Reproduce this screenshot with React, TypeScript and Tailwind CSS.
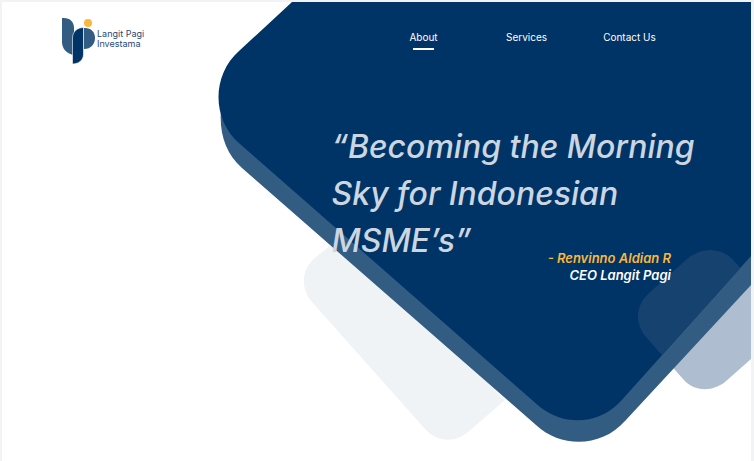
const navItems = [
  { label: 'About', href: '#about', active: true },
  { label: 'Services', href: '#services', active: false },
  { label: 'Contact Us', href: '#contact', active: false },
];

const FRONT =
  'M292 2 L239 51 C212 75 211 119 240 144 L540 407 C564 426 598 425 620 402 L751 256 V2 Z';
const BACK =
  'M221 110 C219 134 226 154 242 168 L536 425 C562 449 602 447 625 421 L751 285 V110 Z';
const TILE =
  'M687 259 C702 246 723 247 735 262 L751 280 V359 L725 382 C712 392 694 392 683 379 L646 337 C635 324 635 307 648 294 Z';

function Backdrop() {
  return (
    <svg viewBox="2 2 749 459" className="absolute top-0 right-0 h-auto w-full" aria-hidden="true">
      <defs>
        <clipPath id="front">
          <path d={FRONT} />
        </clipPath>
      </defs>
      <path
        d="M340 238 L316 257 C301 269 300 288 312 302 L426 430 C437 442 455 443 468 432 L505 400 Z"
        fill="#eff3f6"
      />
      <path d={TILE} fill="#aebdcf" />
      <path d={BACK} fill="#335c83" />
      <path d={FRONT} fill="#003366" />
      <path d={TILE} fill="#16426f" clipPath="url(#front)" />
    </svg>
  );
}

function Logo() {
  return (
    <a href="#home" className="flex items-start text-[#1f4a78]">
      <svg width="35" height="47" viewBox="0 0 35 47" aria-hidden="true">
        <path d="M0 0 H2 C8 0 12 4 12 10 V37 C5 36 0 31 0 24 Z" fill="#335c83" />
        <path d="M22 10 H23 C29 10 33 14 33 20 C33 26 29 31 22 31 Z" fill="#335c83" />
        <path
          d="M21.500 9.500 V36 C21.500 42 17 46 10.500 46 V20 C10.500 14 15 9.500 21.500 9.500 Z"
          fill="#003366"
          stroke="#ffffff"
          strokeWidth="0.600"
        />
        <circle cx="26" cy="5" r="4" fill="#fbb73c" />
      </svg>
      <span className="mt-[11px] flex flex-col text-[9px] leading-[10px]">
        <span>Langit Pagi</span>
        <span>Investama</span>
      </span>
    </a>
  );
}

export default function App() {
  return (
    <div className="min-h-screen border-t-2 border-r-3 border-l-2 border-[#f2f3f5] bg-white font-['Inter',sans-serif]">
      <div className="relative overflow-hidden pb-44">
        <Backdrop />
        <header className="relative flex items-start justify-between pt-4 pr-[70px] pl-15">
          <Logo />
          <nav className="flex pt-[11px] text-[10px] leading-4 text-white">
            {navItems.map((item) => (
              <a key={item.label} href={item.href} className="flex w-[103px] flex-col items-center">
                {item.label}
                {item.active && <span className="mt-[3px] h-[2px] w-[21px] bg-white" />}
              </a>
            ))}
          </nav>
        </header>
        <main className="relative ml-[44%] pt-[58px] pr-12">
          <h1 className="text-[32px] leading-[47px] font-medium text-[#ccd6e0] italic">
            “Becoming the Morning Sky for Indonesian MSME’s”
          </h1>
          <p className="-mt-[14px] flex flex-col items-end pr-8 text-[13px] leading-[17px] font-semibold text-white italic">
            <span className="text-[#fbb73c]">- Renvinno Aldian R</span>
            <span>CEO Langit Pagi</span>
          </p>
        </main>
      </div>
    </div>
  );
}
